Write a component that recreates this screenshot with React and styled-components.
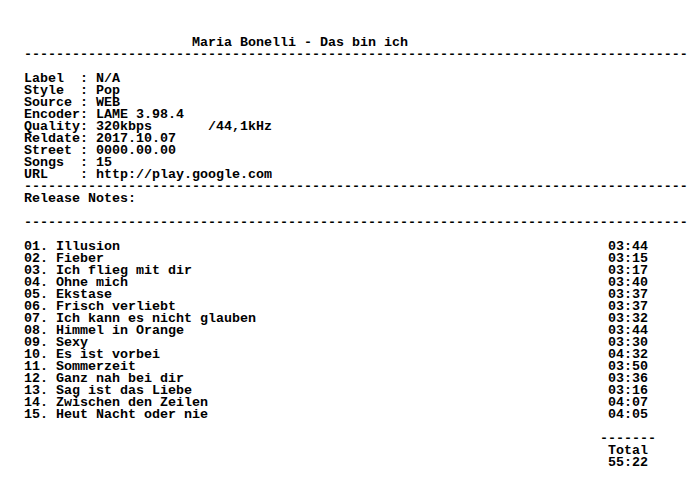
import React from "react";
import styled, { createGlobalStyle } from "styled-components";

const Global = createGlobalStyle`
  html, body { margin: 0; padding: 0; background: #fff; }
`;

const Doc = styled.div`
  padding: 37px 0 0 24px;
  font-family: "Liberation Mono", "DejaVu Sans Mono", monospace;
  font-size: 13.333px;
  line-height: 12px;
  font-weight: bold;
  color: #000;
  width: 672px;
  overflow: hidden;
`;

const Line = styled.div`
  height: 12px;
  white-space: pre;
  padding-left: ${(p) => (p.$col || 0) * 8}px;
`;

const Rule = styled.div`
  height: 12px;
  white-space: pre;
  overflow: hidden;
  &::before { content: "${"-".repeat(83)}"; }
`;

const Field = styled.div`
  display: grid;
  grid-template-columns: 56px 16px 1fr;
  height: 12px;
  white-space: pre;
`;

const TrackList = styled.div`
  display: grid;
  grid-template-columns: 584px auto;
  grid-auto-rows: 12px;
  white-space: pre;
`;

const Totals = styled.div`
  display: grid;
  grid-template-columns: 576px auto;
  grid-auto-rows: 12px;
  white-space: pre;
`;

const info = [
  ["Label", "N/A"],
  ["Style", "Pop"],
  ["Source", "WEB"],
  ["Encoder", "LAME 3.98.4"],
  ["Quality", "320kbps       /44,1kHz"],
  ["Reldate", "2017.10.07"],
  ["Street", "0000.00.00"],
  ["Songs", "15"],
  ["URL", "http://play.google.com"],
];

const tracks = [
  ["Illusion", "03:44"],
  ["Fieber", "03:15"],
  ["Ich flieg mit dir", "03:17"],
  ["Ohne mich", "03:40"],
  ["Ekstase", "03:37"],
  ["Frisch verliebt", "03:37"],
  ["Ich kann es nicht glauben", "03:32"],
  ["Himmel in Orange", "03:44"],
  ["Sexy", "03:30"],
  ["Es ist vorbei", "04:32"],
  ["Sommerzeit", "03:50"],
  ["Ganz nah bei dir", "03:36"],
  ["Sag ist das Liebe", "03:16"],
  ["Zwischen den Zeilen", "04:07"],
  ["Heut Nacht oder nie", "04:05"],
];

export default function App() {
  return (
    <>
      <Global />
      <Doc>
        <Line $col={21}>Maria Bonelli - Das bin ich</Line>
        <Rule />
        <Line />
        {info.map(([k, v]) => (
          <Field key={k}>
            <span>{k}</span>
            <span>:</span>
            <span>{v}</span>
          </Field>
        ))}
        <Rule />
        <Line>Release Notes:</Line>
        <Line />
        <Rule />
        <Line />
        <TrackList>
          {tracks.map(([t, d], i) => (
            <React.Fragment key={t}>
              <span>{String(i + 1).padStart(2, "0")}. {t}</span>
              <span>{d}</span>
            </React.Fragment>
          ))}
        </TrackList>
        <Line />
        <Totals>
          <span />
          <span>-------</span>
          <span />
          <span> Total</span>
          <span />
          <span> 55:22</span>
        </Totals>
      </Doc>
    </>
  );
}
